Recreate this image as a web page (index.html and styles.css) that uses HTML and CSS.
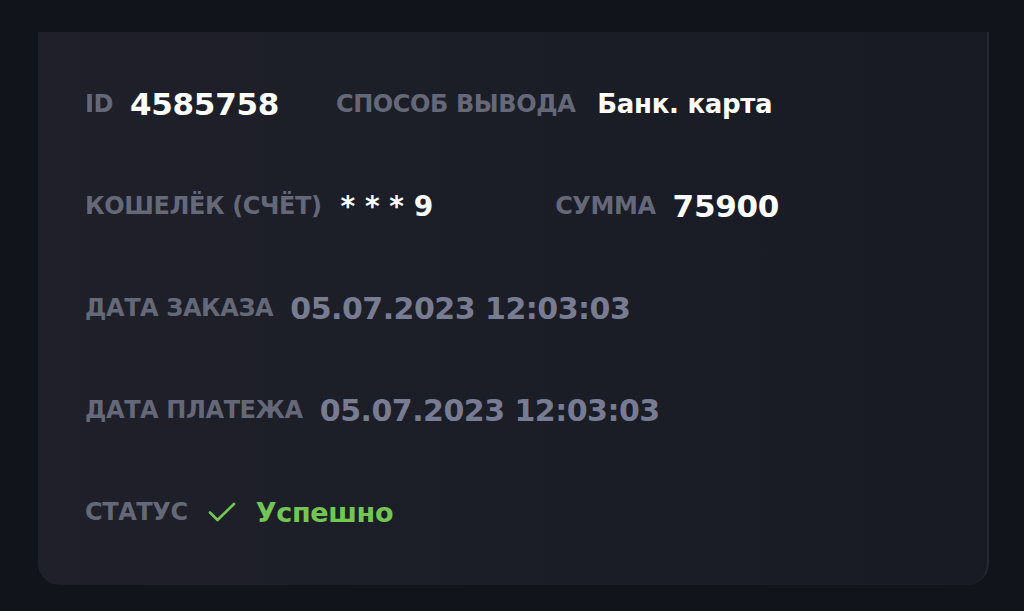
FILE: index.html
```html
<!DOCTYPE html>
<html lang="ru">
    <head>
        <meta name="viewport" content="width=device-width, initial-scale=1.0">
        <title>Вывод</title>
        <link rel="stylesheet" href="styles.css">
    </head>
    <body>
        <div class="order">
            <div class="order__row">
                <div class="order__field">
                    <span class="order__label">ID</span>
                    <span class="order__value">4585758</span>
                </div>
                <div class="order__field">
                    <span class="order__label">Способ вывода</span>
                    <span class="order__value order__value--text">Банк. карта</span>
                </div>
            </div>
            <div class="order__row">
                <div class="order__field order__field--wallet">
                    <span class="order__label">Кошелёк (счёт)</span>
                    <span class="order__value order__value--masked">* * * 9</span>
                </div>
                <div class="order__field">
                    <span class="order__label">Сумма</span>
                    <span class="order__value">75900</span>
                </div>
            </div>
            <div class="order__row">
                <div class="order__field">
                    <span class="order__label">Дата заказа</span>
                    <span class="order__value order__value--muted">05.07.2023 12:03:03</span>
                </div>
            </div>
            <div class="order__row">
                <div class="order__field">
                    <span class="order__label">Дата платежа</span>
                    <span class="order__value order__value--muted">05.07.2023 12:03:03</span>
                </div>
            </div>
            <div class="order__row">
                <div class="order__field">
                    <span class="order__label">Статус</span>
                    <svg class="order__check" width="28" height="20" viewBox="0 0 28 20" fill="none">
                        <path d="M2 10.5l7.5 7.5L26 2" stroke="#74c653" stroke-width="2.6" stroke-linecap="round" stroke-linejoin="round"/>
                    </svg>
                    <span class="order__value order__value--success">Успешно</span>
                </div>
            </div>
        </div>
    </body>
</html>
```

FILE: styles.css
```css
body {
    margin: 0;
    background-color: #12141b;
    font-family: "DejaVu Sans", "Liberation Sans", sans-serif;
}
.order {
    box-sizing: border-box;
    width: 951px;
    height: 553px;
    margin: 32px 0 0 38px;
    padding: 52px 0 0 47px;
    display: flex;
    flex-direction: column;
    gap: 62px;
    background: linear-gradient(90deg, #1f2029 0%, #1c1e27 45%, #181a24 100%);
    border-right: 2px solid #262832;
    border-radius: 0 0 22px 22px;
}
.order__row {
    display: flex;
    align-items: center;
    gap: 57px;
    height: 40px;
}
.order__field {
    display: flex;
    align-items: center;
    gap: 17px;
}
.order__field--wallet {
    margin-right: 65px;
}
.order__label {
    color: #656878;
    font-size: 24px;
    font-weight: bold;
    text-transform: uppercase;
    letter-spacing: -0.4px;
}
.order__value {
    color: #ffffff;
    font-size: 31px;
    font-weight: bold;
    letter-spacing: -0.3px;
}
.order__value--text {
    font-size: 26px;
    margin-left: 5px;
}
.order__value--masked {
    font-size: 28px;
    letter-spacing: 0;
    margin-left: 2px;
}
.order__value--muted {
    color: #787c93;
    font-size: 30px;
    letter-spacing: -0.5px;
}
.order__value--success {
    color: #74c653;
    font-size: 27px;
    margin-left: 3px;
}
.order__check {
    margin-left: 3px;
}
```
